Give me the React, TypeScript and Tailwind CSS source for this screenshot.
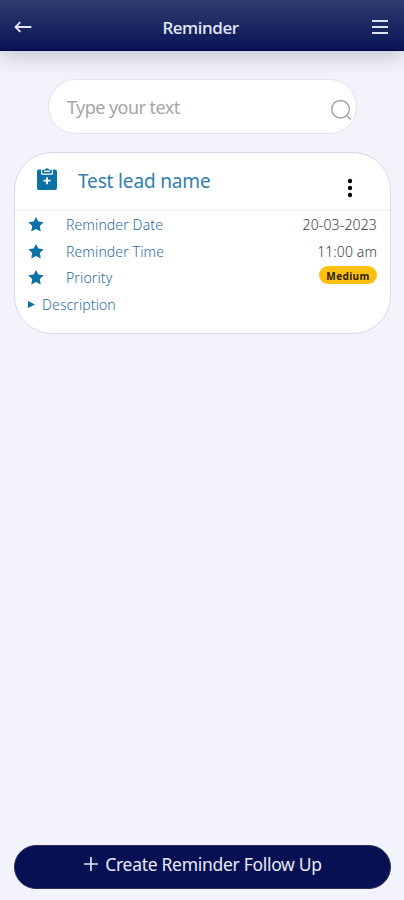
import type { ReactNode } from 'react';

interface ReminderRow {
  label: string;
  value: ReactNode;
}

const rows: ReminderRow[] = [
  {
    label: 'Reminder Date',
    value: <span className="tracking-[0.15px]">20-03-2023</span>,
  },
  {
    label: 'Reminder Time',
    value: <span className="tracking-[0.1px]">11:00 am</span>,
  },
  {
    label: 'Priority',
    value: (
      <span className="mb-[5px] flex h-[18px] w-[58px] items-center justify-center rounded-full bg-[#fdbf10] pt-0.5 text-[10px] font-bold tracking-[0.4px] text-[#2b2410]">
        Medium
      </span>
    ),
  },
];

function StarIcon() {
  return (
    <svg className="h-[15px] w-[16px]" viewBox="0 0 24 23" fill="#0c71a5">
      <path d="M12 0l3.6 7 8.2 1.1-6 5.7 1.5 8.5L12 18.3l-7.3 4 1.5-8.5-6-5.7L8.4 7z" />
    </svg>
  );
}

function Header() {
  return (
    <header className="flex h-[51px] shrink-0 items-center justify-between border-b-2 border-[#040c4c] bg-linear-to-b from-[#303b70] to-[#0b1557] pt-[5px] pr-[16px] pl-[14px] shadow-[0_4px_22px_rgba(20,20,50,0.24)]">
      <svg
        className="h-[14px] w-[18px]"
        viewBox="0 0 18 14"
        fill="none"
        stroke="#e4e6f4"
        strokeWidth="1.8"
      >
        <path d="M17.3 7H1.8M6.3 2.2L1.5 7l4.8 4.8" />
      </svg>
      <h1 className="mt-px mr-[3px] text-[17px] font-medium tracking-[-0.4px] text-[#e8eaf6]">
        Reminder
      </h1>
      <svg
        className="h-[14px] w-[16px]"
        viewBox="0 0 16 14"
        stroke="#dfe2f2"
        strokeWidth="1.8"
      >
        <path d="M0 1h16M0 7h16M0 13h16" />
      </svg>
    </header>
  );
}

export default function App() {
  return (
    <div className="flex h-[900px] w-[404px] flex-col overflow-hidden bg-[#f2f3fb] font-['Noto_Sans','Open_Sans',sans-serif]">
      <Header />

      {/* Search */}
      <div className="mt-[28px] mr-[47px] ml-[48px] flex h-[55px] shrink-0 items-center justify-between rounded-full border border-[#e2e3e9] bg-white pr-[4px] pl-[18px]">
        <span className="pt-[2px] text-[18px] tracking-[-0.55px] text-[#a6a6a6]">
          Type your text
        </span>
        <svg
          className="mt-[7px] h-[22px] w-[22px]"
          viewBox="0 0 22 22"
          fill="none"
          stroke="#a2a2a2"
          strokeWidth="1.4"
        >
          <circle cx="10.5" cy="10.3" r="8.8" />
          <path d="M16.6 16.6l4 4" />
        </svg>
      </div>

      {/* Reminder card */}
      <section className="mt-[18px] mr-[13px] ml-[14px] h-[182px] shrink-0 rounded-[38px] border border-[#d6d9ea] bg-white">
        <div className="flex h-[58px] items-center border-b-2 border-[#f5f5f6] pr-[37px] pl-[22px]">
          <svg className="mb-[5px] h-[23px] w-[20px]" viewBox="0 0 20 23">
            <rect x="0" y="2.5" width="20" height="20.5" rx="2" fill="#0c71a5" />
            <rect x="4" y="1.5" width="12" height="6.2" rx="1" fill="#fff" />
            <path
              d="M5.2 6.5V2.8h2.6a2.3 2.3 0 014.4 0h2.6v3.7z"
              fill="#0c71a5"
            />
            <rect x="7" y="3.6" width="6" height="1.3" fill="#fff" />
            <path d="M10 10.2v7M6.5 13.7h7" stroke="#fff" strokeWidth="1.8" />
          </svg>
          <h2 className="ml-[21px] flex-1 text-[19px] tracking-[-0.15px] text-[#2e80b0]">
            Test lead name
          </h2>
          <svg
            className="mt-[13px] h-[20px] w-[6px]"
            viewBox="0 0 6 20"
            fill="#080808"
          >
            <circle cx="3" cy="3" r="2.2" />
            <circle cx="3" cy="10" r="2.2" />
            <circle cx="3" cy="17" r="2.2" />
          </svg>
        </div>

        <div className="pt-[0.5px] pr-[13px] pl-[13px] text-[14px] font-light">
          {rows.map((row) => (
            <div key={row.label} className="flex h-[26.5px] items-center">
              <StarIcon />
              <span className="ml-[22px] flex-1 tracking-[0.12px] text-[#2b6ca3]">
                {row.label}
              </span>
              <span className="text-[#3c3c3c]">{row.value}</span>
            </div>
          ))}
          <div className="flex h-[26.5px] items-center text-[#2b6ca3]">
            <svg
              className="h-[7px] w-[7px]"
              viewBox="0 0 7 7"
              fill="#0c71a5"
            >
              <path d="M0 0l7 3.5L0 7z" />
            </svg>
            <span className="ml-[7px] tracking-[0.1px]">Description</span>
          </div>
        </div>
      </section>

      <button className="mt-auto mr-[13px] mb-[11px] ml-[14px] flex h-[44px] shrink-0 items-center justify-center rounded-full border border-[#2c3058] bg-[#081054] pb-[6px] pl-px text-[17.5px] tracking-[-0.3px] text-[#e8eaf6]">
        <svg
          className="mr-[7px] h-[14px] w-[14px]"
          viewBox="0 0 14 14"
          stroke="#dfe2f2"
          strokeWidth="1.7"
        >
          <path d="M7 0v14M0 7h14" />
        </svg>
        Create Reminder Follow Up
      </button>
    </div>
  );
}
